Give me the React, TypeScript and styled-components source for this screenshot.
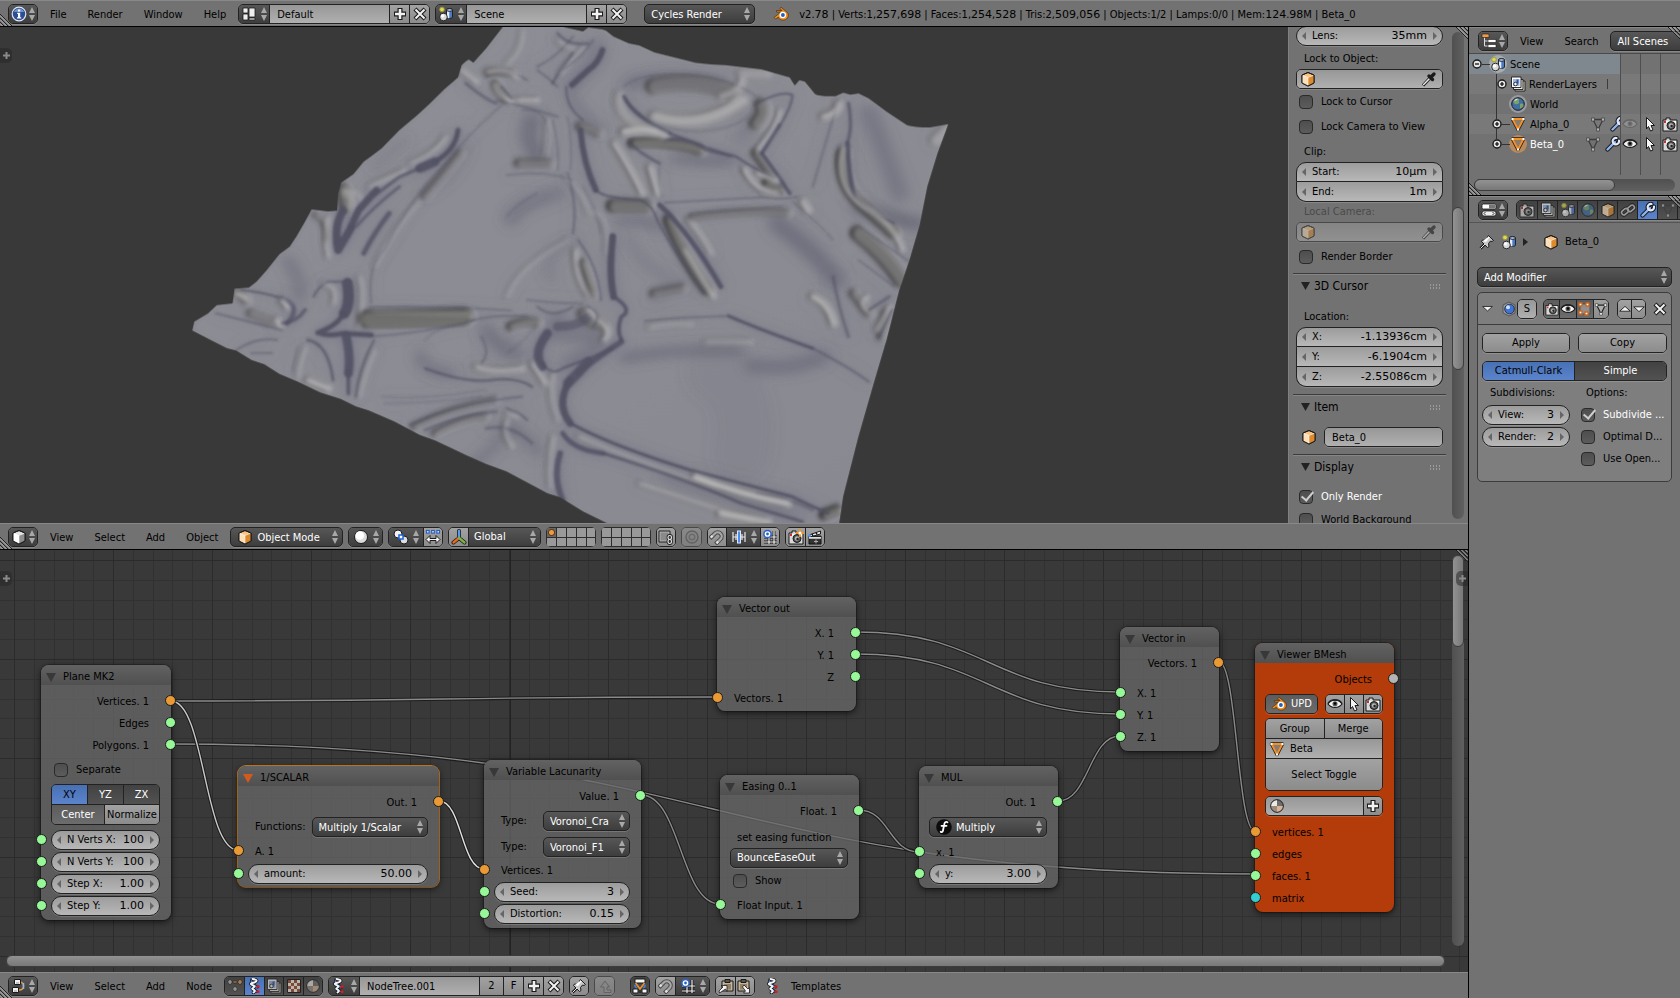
import React from "react";
import styled, { createGlobalStyle, css } from "styled-components";

const UI = `"DejaVu Sans Condensed", "DejaVu Sans", sans-serif`;
const NUM = `"DejaVu Sans", sans-serif`;

const Global = createGlobalStyle`
  * { box-sizing: border-box; }
  body { margin: 0; background: #000; }
  body, button, input, select { font: 11px/14px ${UI}; color: #000; }
  button, input, select { margin: 0; padding: 0; border: 0; background: none; border-radius: 0; outline: 0; }
  svg { display: block; flex: none; }
`;

/* ---------- icons (16 x 16) ---------- */

const K = "#1a1a1a";
const cube = (a: string, b: string, c: string) => (
  <g stroke={K} strokeWidth="1" strokeLinejoin="round">
    <path d="M8 1.500L14 4v8L8 15L2 12V4z" fill={b} />
    <path d="M2 4l6 2.500v8.500L2 12z" fill={a} stroke="none" />
    <path d="M8 6.500L14 4v8l-6 3z" fill={c} stroke="none" />
    <path d="M2 4l6 2.500L14 4M8 6.500V15" fill="none" stroke="#fff" strokeWidth=".7" opacity=".8" />
    <path d="M8 1.500L14 4v8L8 15L2 12V4z" fill="none" />
  </g>
);
const scene = (
  <g stroke={K} strokeWidth=".9">
    <circle cx="4" cy="3.500" r="2.300" fill="#ded94e" stroke="#9a9a40" />
    <path d="M8.500 4v7c0 1.800 6 1.800 6 0V4c0-1.800-6-1.800-6 0z" fill="#4b79c4" />
    <path d="M9 4v7.500c.5.500 1.500.8 2.300.8V5.500C10 5.500 9 5 9 4z" fill="#e6eefb" stroke="none" />
    <ellipse cx="11.500" cy="4" rx="3" ry="1.300" fill="#bcd1f5" />
    <circle cx="5.500" cy="11" r="3.800" fill="#dcdcdc" />
    <circle cx="4.500" cy="9.800" r="1.600" fill="#fff" stroke="none" />
  </g>
);
const helix = (
  <g fill="none" strokeLinecap="round">
    <path d="M5.500 1c5.500 .8 5.500 2.500 0 4s5 2.500 1 4.500s4 2 0 5" stroke={K} strokeWidth="3.600" />
    <path d="M5 4.500L4.500 2.500M5.500 6.500l5 2.500M5.500 10.500l4 3" stroke={K} strokeWidth="3" />
    <path d="M5 5L4.500 3M5 6.500l5 2.500M5 10.500l4 3" stroke="#4a80e0" strokeWidth="1.600" />
    <path d="M5.500 1c5.500 .8 5.500 2.500 0 4s5 2.500 1 4.500s4 2 0 5" stroke="#f4f4f4" strokeWidth="1.900" />
    <path d="M10.500 8.500h1M10.500 13.800h1" stroke="#e01818" strokeWidth="2.400" />
  </g>
);
const triO = (
  <g>
    <path d="M2.500 3h11L8 13.500z" fill="#9a8a76" stroke={K} strokeWidth="3.400" strokeLinejoin="round" />
    <path d="M2.500 3h11L8 13.500z" fill="#8a7c6c" stroke="#f4912a" strokeWidth="1.800" strokeLinejoin="round" />
    <path d="M1.500 2h2v2h-2zM12.500 2h2v2h-2zM7 12.500h2v2H7z" fill="#fff" />
  </g>
);
const camera = (
  <g>
    <path d="M1 4h3V2h4v2h7v11H1z" fill="#d9d9d9" stroke={K} />
    <path d="M2 5h12v2H2z" fill="#fff" />
    <circle cx="9" cy="9.500" r="4" fill="#555" stroke={K} />
    <circle cx="9" cy="9.500" r="2.200" fill="#b8b8b8" />
    <circle cx="9.600" cy="10" r="1.300" fill="#222" />
    <path d="M2 5h2v2H2z" fill="#d42a2a" />
  </g>
);
const magnet = (
  <g fill="none" transform="rotate(45 8 8)">
    <path d="M4 14V7a4 4 0 0 1 8 0v7" stroke="#4a4a4a" strokeWidth="4.200" />
    <path d="M4 13V7a4 4 0 0 1 8 0v6" stroke="#a9a9a9" strokeWidth="2.200" />
    <path d="M2.900 11.500h2.200M10.900 11.500h2.200" stroke="#e4e4e4" strokeWidth="2.400" />
  </g>
);
const snapgrid = (
  <g>
    <path d="M7 2v13M12 2v13M2 8h13M2 13h13" stroke={K} strokeWidth="2.800" />
    <path d="M7 2v13M12 2v13M2 8h13M2 13h13" stroke="#f0f0f0" strokeWidth="1.200" />
    <circle cx="5.500" cy="5" r="3.600" fill="#fff" stroke="#2a63c8" strokeWidth="1.500" />
    <circle cx="5.500" cy="5" r="1.400" fill="#2a63c8" />
  </g>
);
const cross = (
  <g fill="none">
    <path d="M3 3l10 10M13 3L3 13" stroke={K} strokeWidth="4.200" />
    <path d="M3.500 3.500l9 9M12.500 3.500l-9 9" stroke="#f2f2f2" strokeWidth="2" />
  </g>
);
const plus = (
  <g>
    <path d="M8 2v12M2 8h12" stroke={K} strokeWidth="5" />
    <path d="M8 3v10M3 8h10" stroke="#f2f2f2" strokeWidth="2.600" />
  </g>
);
const wrench = (
  <g fill="none" strokeLinecap="round">
    <path d="M2.500 13.500L10 6" stroke={K} strokeWidth="4.200" />
    <path d="M14 4.500A3.300 3.300 0 1 1 11.500 2" stroke={K} strokeWidth="4" />
    <path d="M2.500 13.500L10 6" stroke="#8fb4f0" strokeWidth="2.400" />
    <path d="M14 4.500A3.200 3.200 0 1 1 11.500 2" stroke="#dfe9fb" strokeWidth="2.200" />
  </g>
);
const world = (
  <g>
    <circle cx="8" cy="8" r="6.300" fill="#3f6f9f" stroke={K} />
    <path d="M3 6c2-3 5-4 6-3s-1 2 0 3s-2 3-4 2zM10 8c2-1 3.500 0 3.500 1.500S11 13 10 12z" fill="#7da06a" />
    <path d="M4 4.500c1-1.500 3-2 4-1.700C7 4 5.500 5 4 4.500z" fill="#e9f0f7" />
  </g>
);
const layersI = (
  <g stroke={K} strokeWidth=".9">
    <path d="M5 5h10v10H5z" fill="#d8d0c0" />
    <path d="M3.500 3.500h9.500v10H3.500z" fill="#e8e8e8" />
    <path d="M1.500 1h9.500v10.500H1.500z" fill="#fff" />
    <path d="M3 3h6.500v7H3z" fill="#9fb9df" stroke="none" />
    <circle cx="5.500" cy="8" r="1.800" fill="#fff" />
    <path d="M6.500 3.500h2v4h-2z" fill="#2d55a8" stroke="none" />
  </g>
);
const matball = (
  <g>
    <circle cx="8" cy="8" r="6.300" fill="#6e6e6e" stroke={K} />
    <path d="M8 2.200A5.800 5.800 0 0 0 2.200 8H8z" fill="#efe9e2" />
    <path d="M8 8h5.800A5.800 5.800 0 0 1 8 13.800z" fill="#d9b394" />
    <path d="M8 8H2.200A5.800 5.800 0 0 0 8 13.800z" fill="#9b8a80" />
  </g>
);
const pin = (
  <g strokeLinejoin="round">
    <path d="M1.500 14.500L6 10" stroke={K} strokeWidth="2.600" />
    <path d="M9.500 1.500l5 5l-1.500 1l-1.500-.5l-2 2.500l.5 3l-1.500 1L2.500 7.500l1-1.500l3 .5L9 4.500L8.500 3z" fill="#c9c9c9" stroke={K} />
    <path d="M9.700 2.500l1 1L7 8L4 7z" fill="#fff" />
    <path d="M1.500 14.500L6 10" stroke="#eee" />
  </g>
);
const eye = (
  <g>
    <path d="M1 8c3-5 11-5 14 0c-3 4.500-11 4.500-14 0z" fill="#f4f4f4" stroke={K} strokeWidth="1.100" />
    <circle cx="8" cy="7.700" r="2.500" fill="#555" />
    <circle cx="8" cy="7.500" r="1.200" fill="#000" />
    <path d="M1 7.500c3-5 11-5 14 0" fill="none" stroke="#222" strokeWidth="1.300" />
  </g>
);
const ICONS: Record<string, React.ReactNode> = {
  info: (
    <g>
      <circle cx="8" cy="8" r="6.800" fill="#2c4f94" stroke="#dfe6f4" strokeWidth="1.200" />
      <path d="M3 6a5.300 5.300 0 0 1 10 0z" fill="#6f93d0" />
      <path d="M7 3.500h2.200v2H7zM6.200 6.800h3v4.500h1v1.200H6v-1.200h1V8h-.8z" fill="#fff" />
    </g>
  ),
  cubeO: cube("#fde0b8", "#f7c483", "#dd8a2e"),
  cubeW: cube("#fff", "#e4e4e4", "#8f8f8f"),
  scene,
  helix,
  camera,
  magnet,
  snapgrid,
  cross,
  plus,
  wrench,
  world,
  layers: layersI,
  matball,
  pin,
  eye,
  triO,
  triG: (
    <g>
      <path d="M3 3.500h10L8 13.500z" fill="none" stroke="#3c3c3c" strokeWidth="1.300" />
      <path d="M1.500 2h3v3h-3zM11.500 2h3v3h-3zM6.500 12h3v3h-3z" fill="#b4b4b4" stroke="#3c3c3c" strokeWidth=".7" />
    </g>
  ),
  triW: (
    <g>
      <path d="M3 3.500h10L8 13.500z" fill="#b0b0b0" stroke="#222" strokeWidth="1.300" />
      <path d="M1.500 2h3v3h-3zM11.500 2h3v3h-3zM6.500 12h3v3h-3z" fill="#fff" stroke="#222" strokeWidth=".7" />
    </g>
  ),
  layout: (
    <g fill="#eee" stroke={K} strokeWidth=".8">
      <path d="M2 2h5v5H2zM2 8h5v6H2zM8 2h6v9H8zM8 12h6v2H8z" />
    </g>
  ),
  blender: (
    <g>
      <path d="M1 11.500L8 6H3.500V4.500H9L7 2.500L8 1.200l6 5c2 2 1.700 5-.5 6.800c-2.500 2-7 1.500-8.200-1.800L2.500 13z" fill="#ee8b1d" stroke="#4a3010" strokeWidth=".7" />
      <circle cx="9.800" cy="9" r="3.300" fill="#fff" />
      <circle cx="9.900" cy="9" r="1.900" fill="#2461b4" />
    </g>
  ),
  dropper: (
    <g>
      <path d="M2 14.500L9 7" stroke={K} strokeWidth="3.200" />
      <path d="M2.200 14L9 7" stroke="#e8e8e8" strokeWidth="1.500" />
      <path d="M8 5l3.500 3.500M9.500 6.500L13 3" stroke={K} strokeWidth="3.400" strokeLinecap="round" />
    </g>
  ),
  outliner: (
    <g>
      <path d="M3.500 3v10h4M3.500 8h4" fill="none" stroke="#ddd" />
      <path d="M1 1h7v3.500H1z" fill="#f09a4a" stroke={K} strokeWidth=".6" />
      <path d="M7 6.500h8v3H7zM7 11.500h8v3H7z" fill="#fff" stroke={K} strokeWidth=".6" />
    </g>
  ),
  props: (
    <g stroke={K} strokeWidth=".8">
      <rect x="1" y="2" width="14" height="5" rx="1.500" fill="#fff" />
      <path d="M8 2.500h6.500v4H8z" fill="#777" stroke="none" />
      <rect x="1" y="9" width="14" height="5" rx="2" fill="#eee" />
      <path d="M4.500 10L3 11.500L4.500 13M11.500 10l1.500 1.500l-1.500 1.500" fill="none" stroke="#000" />
    </g>
  ),
  nodes: (
    <g fill="none">
      <path d="M8 4c6 0 6 8 0 8" stroke="#e59a34" strokeWidth="1.500" />
      <path d="M12.500 5v6" stroke="#8fb6f2" strokeWidth="1.500" />
      <path d="M3.500 1.500h6v5h-6zM1.500 9.500h6v5h-6z" fill="#f2f2f2" stroke={K} />
      <path d="M5 5h3M3 13h3" stroke="#999" />
    </g>
  ),
  cursor: <path d="M4.500 1.500l8 8H9l2 4.500l-2.500 1l-2-4.500L4.500 13z" fill="#f4f4f4" stroke={K} strokeLinejoin="round" />,
  chain: (
    <g fill="none">
      <g stroke={K} strokeWidth="3.600">
        <rect x="1.500" y="7.500" width="7.500" height="4.500" rx="2.200" transform="rotate(-40 5 10)" />
        <rect x="7" y="4" width="7.500" height="4.500" rx="2.200" transform="rotate(-40 11 6)" />
      </g>
      <g stroke="#c6c6c6" strokeWidth="1.600">
        <rect x="1.500" y="7.500" width="7.500" height="4.500" rx="2.200" transform="rotate(-40 5 10)" />
        <rect x="7" y="4" width="7.500" height="4.500" rx="2.200" transform="rotate(-40 11 6)" />
      </g>
    </g>
  ),
  sphere: (
    <g>
      <circle cx="8" cy="8" r="6.500" fill="#dcdcdc" stroke={K} />
      <circle cx="6.800" cy="6.500" r="4.300" fill="#fff" />
    </g>
  ),
  pivot: (
    <g>
      <circle cx="5" cy="5" r="4" fill="#f2f2f2" stroke={K} />
      <circle cx="11" cy="11" r="4" fill="#ddd" stroke={K} />
      <path d="M6 6h4v4H6z" fill="#fff" stroke="#1d62d8" strokeWidth="1.500" />
    </g>
  ),
  centers: (
    <g>
      <g fill="#fff" stroke="#2560c0" strokeWidth="1.200">
        <rect x="1.500" y="1.500" width="2.600" height="2.600" />
        <rect x="6.700" y="1.500" width="2.600" height="2.600" />
        <rect x="11.900" y="1.500" width="2.600" height="2.600" />
      </g>
      <path d="M1 10.500l4-4v3h6v-3l4 4l-4 4v-3H5v3z" fill="#f4f4f4" stroke={K} />
    </g>
  ),
  axes: (
    <g strokeLinecap="round">
      <path d="M8 9V2M8 9l-5.500 4.500M8 9l5.500 4.500" stroke={K} strokeWidth="4" />
      <path d="M8 9V2" stroke="#5a9be8" strokeWidth="2.400" />
      <path d="M8 9l-5.500 4.500" stroke="#e86a1e" strokeWidth="2.400" />
      <path d="M8 9l5.500 4.500" stroke="#7cb342" strokeWidth="2.400" />
    </g>
  ),
  lockcam: (
    <g>
      <path d="M1 2h11v11H1z" fill="#b4b4b4" stroke="#222" />
      <path d="M2.500 3.500h8v8h-8z" fill="#8a8a8a" />
      <g fill="none" stroke="#222" strokeWidth="2.800">
        <rect x="10" y="6.500" width="3.500" height="4" rx="1.700" />
        <rect x="10" y="10.500" width="3.500" height="4" rx="1.700" />
      </g>
      <g fill="none" stroke="#e4e4e4" strokeWidth="1.200">
        <rect x="10" y="6.500" width="3.500" height="4" rx="1.700" />
        <rect x="10" y="10.500" width="3.500" height="4" rx="1.700" />
      </g>
    </g>
  ),
  prop: (
    <g fill="none" stroke="#555" strokeWidth="1.500">
      <circle cx="8" cy="8" r="6" />
      <circle cx="8" cy="8" r="2.800" stroke="#666" />
    </g>
  ),
  snapinc: (
    <g>
      <path d="M2 3v10M5 5v6M11 5v6M14 3v10M2 8h12" stroke="#e8e8e8" strokeWidth="1.200" />
      <rect x="6.500" y="2" width="3" height="12" fill="#4d8df0" stroke="#dfe9fb" />
    </g>
  ),
  camplus: (
    <g>
      {camera}
      <path d="M12 0v8M8 4h8" stroke="#f29222" strokeWidth="2" />
      <circle cx="12" cy="4" r="1.500" fill="#fff" />
    </g>
  ),
  clapper: (
    <g>
      <path d="M2 7h12v8H2z" fill="#333" stroke="#111" />
      <path d="M2 6L13.500 2v3L3 8z" fill="#eee" stroke={K} />
      <path d="M5 5l1 2M9 3.500l1 2" stroke="#111" strokeWidth="1.500" />
      <path d="M2 8h12v1.800H2z" fill="#ddd" />
      <path d="M9 10.500v4M7 12.500h4" stroke="#aaa" />
      <circle cx="2.500" cy="6.500" r="1.400" fill="#4d9bf0" />
    </g>
  ),
  shader: (
    <g fill="#a9a49c" stroke={K} strokeWidth=".6">
      <path d="M3 1l2.500 3L3 7L.5 4zM8 8l2.500 3L8 14l-2.500-3zM13 1l2.500 3L13 7l-2.500-3z" />
      <path d="M6 3h4v2H6z" fill="#c08a56" />
      <path d="M13 1l2.500 3L13 7l-2.500-3z" fill="#c08a56" />
    </g>
  ),
  checker: (
    <g>
      <path d="M1.500 1.500h13v13h-13z" fill="#d8d0c6" stroke={K} />
      <path d="M2 2h3v3H2zM8 2h3v3H8zM5 5h3v3H5zM11 5h3v3h-3zM2 8h3v3H2zM8 8h3v3H8zM5 11h3v3H5zM11 11h3v3h-3z" fill="#8a4a36" />
    </g>
  ),
  parent: <path d="M7 14.500V9H3.500L8 3l4.500 6H10v3h4v2.500z" fill="#9a9a9a" stroke="#555" />,
  backdrop: (
    <g>
      <path d="M3 1h10v4H3z" fill="#f4f4f4" stroke={K} />
      <path d="M3.500 5L8 11l4.500-6" fill="none" stroke="#f29222" strokeWidth="1.600" />
      <path d="M2.500 7L5 11M13.500 7L11 11" stroke="#3f7fe0" strokeWidth="1.600" />
      <path d="M1 11h5v4H1zM10 11h5v4h-5z" fill="#f4f4f4" stroke={K} />
      <path d="M6 12h4v3H6z" fill="#333" />
    </g>
  ),
  copy: (
    <g>
      <path d="M4 3h11v10H4z" fill="#c9b594" stroke={K} />
      <path d="M7 1.500h5v3H7z" fill="#555" stroke={K} />
      <path d="M6 6h7v5.500H6z" fill="#8f8069" />
      <path d="M1.500 15l-.5-2l4-4l-2-1.500h6v6L7.500 11z" fill="#f4f4f4" stroke={K} strokeWidth=".8" />
    </g>
  ),
  paste: (
    <g>
      <path d="M1 3h11v10H1z" fill="#c9b594" stroke={K} />
      <path d="M4 1.500h5v3H4z" fill="#555" stroke={K} />
      <path d="M3 6h7v5.500H3z" fill="#8f8069" />
      <path d="M7 7l4 4l1.500-1.500V15h-6L8.500 13L5.500 9z" fill="#f4f4f4" stroke={K} strokeWidth=".8" />
    </g>
  ),
  func: (
    <g>
      <circle cx="8" cy="8" r="7.800" fill="#0c0c0c" />
      <path d="M11.500 3.300c-1.800-1-3 .2-3.300 2.200L7 11.500c-.3 1.600-1.300 2-2.300 1.300M5.500 6.800h5" fill="none" stroke="#fff" strokeWidth="1.800" strokeLinecap="round" />
    </g>
  ),
  subsurf: (
    <g>
      <path d="M8 1l6 3v8l-6 3l-6-3V4z" fill="#9a9a9a" stroke="#555" />
      <circle cx="8.500" cy="8" r="4.800" fill="#3f74d6" stroke={K} strokeWidth=".7" />
      <circle cx="7" cy="6.300" r="2" fill="#cfe0fa" />
    </g>
  ),
  edit: (
    <g>
      <path d="M3 3h8l2 2v8H5l-2-2z" fill="#8f8f8f" stroke="#555" />
      <g fill="#fff" stroke="#d0661c" strokeWidth="1.300">
        <path d="M2 2h3v3H2zM9 2h3v3H9zM2 10h3v3H2zM8 11h3v3H8z" />
      </g>
    </g>
  ),
  up: <path d="M2 10.500L8 5l6 5.500z" fill="#f4f4f4" stroke={K} strokeLinejoin="round" />,
  down: <path d="M2 5.500L8 11l6-5.500z" fill="#f4f4f4" stroke={K} strokeLinejoin="round" />,
  expand: (
    <g>
      <circle cx="8" cy="8" r="4" fill="#e6e6e6" stroke={K} strokeWidth="1.400" />
      <path d="M8 6v4M6 8h4" stroke="#000" strokeWidth="1.200" />
    </g>
  ),
  collapse: (
    <g>
      <circle cx="8" cy="8" r="4" fill="#e6e6e6" stroke={K} strokeWidth="1.400" />
      <path d="M6 8h4" stroke="#000" strokeWidth="1.200" />
    </g>
  ),
};

const Icon = ({ n, s = 16, o = 1 }: { n: string; s?: number; o?: number }) => (
  <svg width={s} height={s} viewBox="0 0 16 16" opacity={o} aria-hidden="true">
    {ICONS[n]}
  </svg>
);
const UpDown = () => (
  <svg width="6" height="14" viewBox="0 0 6 14" aria-hidden="true">
    <path d="M3 0l3 6H0zM3 14l3-6H0z" fill="#a8a8a8" />
  </svg>
);
const Arrow = ({ right = false }: { right?: boolean }) => (
  <svg width="4" height="8" viewBox="0 0 4 8" aria-hidden="true">
    <path d={right ? "M0 0l4 4l-4 4z" : "M4 0L0 4l4 4z"} fill="#666" />
  </svg>
);

/* ---------- widgets ---------- */

type Kind = "menu" | "tool" | "on" | "down" | "text" | "radio";
const FILL: Record<Kind, string> = {
  menu: "linear-gradient(#575757, #3d3d3d)",
  radio: "linear-gradient(#424242, #525252)",
  tool: "linear-gradient(#a2a2a2, #8c8c8c)",
  on: "linear-gradient(#4870b4, #5b84cc)",
  down: "linear-gradient(#5c5c5c, #6c6c6c)",
  text: "linear-gradient(#979797, #b0b0b0)",
};
const INK: Record<Kind, string> = { menu: "#fff", radio: "#fff", tool: "#000", on: "#000", down: "#fff", text: "#000" };

const Group = styled.div<{ $grow?: boolean; $faded?: boolean }>`
  display: flex;
  height: 20px;
  flex: ${(p) => (p.$grow ? "1 1 0" : "none")};
  min-width: 0;
  border: 1px solid #222;
  border-radius: 5px;
  overflow: hidden;
  box-shadow: 0 1px 0 rgba(255, 255, 255, 0.16);
  opacity: ${(p) => (p.$faded ? 0.5 : 1)};
`;
const Seg = styled.button<{ $w?: number; $kind?: Kind; $gap?: number }>`
  display: flex;
  align-items: center;
  justify-content: center;
  gap: ${(p) => p.$gap ?? 4}px;
  flex: ${(p) => (p.$w ? `0 0 ${p.$w}px` : "1 1 0")};
  min-width: 0;
  white-space: nowrap;
  background: ${(p) => FILL[p.$kind ?? "tool"]};
  color: ${(p) => INK[p.$kind ?? "tool"]};
  & + &,
  input + & {
    border-left: 1px solid #222;
  }
`;
const IconSlot = styled.span`
  display: flex;
  align-items: center;
  padding: 0 5px 0 3px;
  background: ${FILL.text};
`;
const TextInput = styled.input<{ $w?: number }>`
  flex: ${(p) => (p.$w ? `0 0 ${p.$w}px` : "1 1 0")};
  width: 0;
  min-width: 0;
  padding: 1px 7px 0;
  background: ${FILL.text};
  button + & {
    border-left: 1px solid #222;
  }
  ${IconSlot} + & {
    padding-left: 0;
  }
`;

const SelectBox = styled.span<{ $w?: number }>`
  display: flex;
  align-items: center;
  gap: 4px;
  height: 20px;
  flex: ${(p) => (p.$w ? `0 0 ${p.$w}px` : "1 1 0")};
  min-width: 0;
  padding: 0 4px 0 6px;
  border: 1px solid #222;
  border-radius: 5px;
  background: ${FILL.menu};
  box-shadow: 0 1px 0 rgba(255, 255, 255, 0.16);
`;
const NativeSelect = styled.select`
  appearance: none;
  flex: 1 1 0;
  width: 0;
  min-width: 0;
  padding-top: 1px;
  color: #fff;
`;
const Select = ({ value, label, icon, w }: { value: string; label: string; icon?: string; w?: number }) => (
  <SelectBox $w={w}>
    {icon && <Icon n={icon} />}
    <NativeSelect aria-label={label} defaultValue={value}>
      <option>{value}</option>
    </NativeSelect>
    <UpDown />
  </SelectBox>
);

const FieldBox = styled.label`
  display: flex;
  align-items: center;
  gap: 3px;
  height: 20px;
  flex: 1 1 0;
  min-width: 0;
  padding: 0 5px;
  border: 1px solid #222;
  border-radius: 10px;
  background: linear-gradient(#9c9c9c, #b8b8b8);
  box-shadow: 0 1px 0 rgba(255, 255, 255, 0.16);
  white-space: nowrap;
`;
const FieldStack = styled.div`
  display: flex;
  flex-direction: column;
  ${FieldBox} {
    flex: none;
  }
  ${FieldBox}:not(:first-child) {
    border-top-left-radius: 0;
    border-top-right-radius: 0;
    border-top: 0;
  }
  ${FieldBox}:not(:last-child) {
    border-bottom-left-radius: 0;
    border-bottom-right-radius: 0;
    box-shadow: none;
  }
`;
const Value = styled.input`
  flex: 1 1 0;
  width: 0;
  min-width: 0;
  padding-right: 3px;
  text-align: right;
  font-family: ${NUM};
`;
const FieldName = styled.span`
  padding-left: 3px;
`;
const NumField = ({ name, value }: { name: string; value: string }) => (
  <FieldBox>
    <Arrow />
    <FieldName>{name}</FieldName>
    <Value defaultValue={value} />
    <Arrow right />
  </FieldBox>
);

const Box = styled.input`
  appearance: none;
  position: relative;
  flex: none;
  width: 14px;
  height: 14px;
  border: 1px solid #2a2a2a;
  border-radius: 4px;
  background: linear-gradient(#4e4e4e, #5c5c5c);
  &:checked::after {
    content: "";
    position: absolute;
    left: 4px;
    top: -2px;
    width: 5px;
    height: 10px;
    border: solid #cfcfcf;
    border-width: 0 2px 2px 0;
    transform: rotate(40deg);
  }
`;
const CheckLabel = styled.label<{ $h: number; $on?: boolean }>`
  display: flex;
  align-items: center;
  gap: 8px;
  height: ${(p) => p.$h}px;
  padding-left: 3px;
  color: ${(p) => (p.$on ? "#fff" : "#000")};
  white-space: nowrap;
`;
const Check = ({ text, on, h = 25 }: { text: string; on?: boolean; h?: number }) => (
  <CheckLabel $h={h} $on={on}>
    <Box type="checkbox" defaultChecked={on} />
    {text}
  </CheckLabel>
);

/* ---------- frame ---------- */

const Screen = styled.div`
  display: flex;
  flex-direction: column;
  height: 100vh;
  min-height: 720px;
  overflow: hidden;
  background: #000;
`;
const Bar = styled.div`
  position: relative;
  display: flex;
  align-items: center;
  flex: none;
  height: 26px;
  padding: 1px 0 0 8px;
  background: #727272;
  border-top: 1px solid #888;
  gap: 5px;
  overflow: hidden;
  white-space: nowrap;
`;
const Menus = styled.nav`
  display: flex;
  margin: 0 -3px 0 -4px;
`;
const MenuBtn = styled.button`
  padding: 1px 10px 0 11px;
`;
const Columns = styled.div`
  display: grid;
  grid-template-columns: minmax(0, 1fr) 211px;
  gap: 1px;
  flex: 1;
  min-height: 0;
  padding-top: 1px;
`;
const LeftCol = styled.div`
  display: grid;
  grid-template-rows: minmax(0, 522fr) minmax(0, 448fr);
  gap: 1px;
  min-height: 0;
`;
const RightCol = styled.div`
  display: flex;
  flex-direction: column;
  gap: 1px;
  min-height: 0;
`;
const Area = styled.section<{ $h?: number }>`
  position: relative;
  display: flex;
  flex-direction: column;
  flex: ${(p) => (p.$h ? `0 0 ${p.$h}px` : "1 1 0")};
  min-height: 0;
  min-width: 0;
  overflow: hidden;
  background: #727272;
`;
const CornerSvg = styled.svg<{ $at: "tr" | "bl" }>`
  position: absolute;
  z-index: 3;
  ${(p) => (p.$at === "tr" ? css`top: 0; right: 0;` : css`bottom: 0; left: 0;`)}
`;
const Corner = ({ at }: { at: "tr" | "bl" }) => (
  <CornerSvg $at={at} width="12" height="12" viewBox="0 0 12 12" aria-hidden="true">
    <path d="M0 0l12 12M4 0l8 8M8 0l4 4" stroke="#222" transform={at === "bl" ? "rotate(180 6 6)" : undefined} />
    <path d="M1.500 0L12 10.500M5.500 0L12 6.500M9.500 0L12 2.500" stroke="#bbb" transform={at === "bl" ? "rotate(180 6 6)" : undefined} />
  </CornerSvg>
);
const Stats = styled.span`
  padding: 1px 0 0 5px;
`;
const Digits = styled.span`
  font-family: ${NUM};
`;
const Gap = styled.span<{ $w: number }>`
  flex: none;
  width: ${(p) => p.$w}px;
`;
const EditorMenu = ({ icon, label }: { icon: string; label: string }) => (
  <Group>
    <Seg $w={28} $kind="menu" $gap={2} aria-label={label}>
      <Icon n={icon} />
      <UpDown />
    </Seg>
  </Group>
);

/* ---------- 3D view ---------- */

const ViewBody = styled.div`
  display: flex;
  justify-content: flex-end;
  flex: 1;
  min-height: 0;
  position: relative;
  background: #393939;
`;
const MeshSvg = styled.svg`
  position: absolute;
  left: 180px;
  top: -7px;
`;
const Tab = styled.button<{ $right?: boolean }>`
  position: absolute;
  z-index: 2;
  ${(p) => (p.$right ? "right: 0; border-radius: 5px 0 0 5px;" : "left: 0; border-radius: 0 5px 5px 0;")}
  top: 21px;
  display: flex;
  align-items: center;
  justify-content: center;
  width: 12px;
  height: 15px;
  background: rgba(40, 40, 40, 0.55);
`;
const TabPlus = () => (
  <svg width="7" height="7" viewBox="0 0 7 7" aria-hidden="true">
    <path d="M3.500 0v7M0 3.500h7" stroke="#8a8a8a" strokeWidth="2" />
  </svg>
);

type Ridge = [string, number, number?];
const OUTLINE =
  "M638 10L600 85L575 128L566 118L560 124L552 135L545 172L520 205L490 250L465 285L430 330L395 385L375 408L360 425L340 462L316 488L310 520L308 572L290 574L258 568L245 605L228 650L215 680L195 702L170 750L150 785L135 803L107 806L103 850L72 855L55 880L28 905L24 932L60 960L92 985L110 992L140 1020L165 1033L195 1062L230 1085L275 1118L315 1137L345 1160L370 1172L420 1205L470 1245L500 1262L560 1305L600 1332L640 1355L720 1420L745 1432L790 1475L840 1512L1292 1512L1300 1430L1330 1250L1360 1090L1385 960L1410 810L1430 720L1450 615L1465 500L1485 400L1506 312L1470 322Q1440 322 1425 315L1385 275L1350 235L1330 220L1314 224L1300 218L1285 228Q1255 230 1245 222L1233 200L1225 185L1214 180L1205 196L1195 172L1140 148L1070 135Q1040 134 1010 128L930 97L900 76L880 70L850 50L835 32L828 28L800 22L790 34L755 22L740 10z";
const DARK_WIDE: Ridge[] = [
  ["M820 60Q825 110 765 200Q765 270 830 330", 7, 0.5],
  ["M690 300Q672 350 700 405", 16, 0.6],
  ["M1110 300Q1120 340 1095 360", 8, 0.4],
  ["M740 520Q650 560 650 600", 14, 0.4],
  ["M1170 610Q1250 700 1285 780", 18, 0.55],
  ["M1330 560Q1400 600 1450 612", 12, 0.7],
  ["M1350 280Q1370 350 1410 520", 18, 0.4],
  ["M870 1015Q960 985 1100 992", 9, 0.6],
  ["M1120 1035Q1200 1055 1260 1010", 14, 0.5],
  ["M640 1220Q690 1250 700 1300", 8, 0.5],
  ["M470 1000Q470 1050 530 1060", 9, 0.5],
  ["M740 900L730 940M600 930Q620 980 660 1000", 14, 0.5],
  ["M930 830Q960 800 990 800", 8, 0.6],
  ["M880 190Q960 160 1060 190", 12, 0.5],
  ["M210 720Q240 780 235 830", 10, 0.5],
  ["M480 520Q540 470 560 380", 9, 0.3],
  ["M1050 1060Q1120 1120 1100 1300", 60, 0.1],
  ["M560 1350Q640 1260 640 1220", 10, 0.4],
  ["M970 415Q1040 430 1080 418", 9, 0.6],
  ["M860 600Q920 600 940 620", 10, 0.5],
  ["M730 780Q700 720 770 660", 6, 0.4],
  ["M880 650Q900 740 960 770", 8, 0.3],
  ["M760 950Q790 930 830 960Q800 1010 760 1030", 14, 0.4],
  ["M430 240L500 170M380 440L440 360", 8, 0.25],
  ["M950 1370Q1050 1430 1200 1480", 6, 0.5],
];
const DARK: Ridge[] = [
  ["M828 90Q820 130 800 150L768 195", 6, 0.95],
  ["M757 200Q755 260 790 300", 2, 0.7],
  ["M785 330Q790 430 815 510", 6, 0.95],
  ["M815 510Q830 535 900 540Q925 550 935 600", 2, 0.8],
  ["M545 330Q540 390 500 425", 5, 0.95],
  ["M500 425L470 445", 9, 0.9],
  ["M470 445L430 470L370 540", 3, 0.8],
  ["M385 510L350 570L335 620", 7, 0.95],
  ["M320 570Q300 620 310 690L335 625", 8, 0.95],
  ["M345 620Q380 560 430 500", 3, 0.7],
  ["M410 580Q380 640 360 700", 5, 0.8],
  ["M328 790Q335 850 322 880", 11, 0.95],
  ["M320 880Q310 915 270 938Q290 950 320 940L375 945", 5, 0.95],
  ["M325 945Q335 1010 330 1060", 9, 0.9],
  ["M330 1050L330 1120", 4, 0.8],
  ["M250 960Q290 970 300 1080", 3, 0.7],
  ["M330 785H290Q270 800 262 830", 2, 0.7],
  ["M370 950Q480 940 580 900", 1, 0.9],
  ["M370 862Q500 855 650 872", 1, 0.8],
  ["M380 960Q350 1050 345 1130", 2, 0.7],
  ["M848 650Q840 760 850 830", 7, 0.95],
  ["M850 830Q890 870 865 890Q855 930 865 960", 4, 0.85],
  ["M865 965Q800 1030 780 1060", 6, 0.85],
  ["M800 1025Q780 1060 760 1090", 10, 0.85],
  ["M765 1080Q735 1150 765 1210", 7, 0.95],
  ["M765 1210Q850 1280 1000 1350Q1100 1390 1200 1430Q1240 1460 1270 1480", 3, 0.95],
  ["M720 940Q690 1000 710 1040", 9, 0.9],
  ["M710 1030Q730 1070 750 1045L850 985", 2, 0.85],
  ["M480 1045Q560 1090 610 1080T690 1100", 2, 0.85],
  ["M750 1240Q770 1290 830 1300", 5, 0.85],
  ["M830 1300Q980 1370 1100 1450L1220 1505", 3, 0.85],
  ["M745 1300Q730 1370 750 1440", 6, 0.85],
  ["M640 1165Q670 1180 680 1200M450 1215Q540 1150 670 1130", 2, 0.6],
  ["M480 1230Q560 1180 620 1175M600 1225Q650 1210 690 1270", 3, 0.5],
  ["M395 1130Q480 1140 600 1110M400 1150Q500 1150 590 1130", 1, 0.4],
  ["M910 903Q990 890 1075 888", 1, 0.9],
  ["M1075 888Q1130 925 1240 985", 3, 0.95],
  ["M1240 985Q1310 1040 1350 1085", 2, 0.6],
  ["M940 555Q1000 640 1060 800", 5, 0.9],
  ["M935 600Q970 700 1030 820", 2, 0.7],
  ["M870 230Q890 290 960 340", 4, 0.9],
  ["M960 340Q1040 390 1090 410Q1130 450 1165 475", 2, 0.9],
  ["M870 200Q900 155 1000 165Q1090 180 1130 230", 1, 0.6],
  ["M1120 270Q1110 320 1020 335Q960 335 920 300", 1, 0.5],
  ["M1130 250Q1180 210 1200 225Q1200 260 1170 330", 2, 0.85],
  ["M1175 315L1140 400", 4, 0.85],
  ["M1140 400Q1170 460 1195 520", 4, 0.85],
  ["M880 365Q900 400 940 430M950 360Q1000 350 1030 390L1080 408", 3, 0.7],
  ["M1310 250Q1320 330 1305 380", 3, 0.8],
  ["M1308 370Q1310 460 1320 530", 5, 0.9],
  ["M1320 530Q1350 580 1400 610", 2, 0.8],
  ["M1290 240L1240 500", 2, 0.5],
  ["M1330 620L1430 725M1330 720L1400 800", 1, 0.85],
  ["M1200 545Q1260 620 1280 660M950 548Q1050 540 1140 532Q1190 540 1210 530", 1, 0.8],
  ["M1000 580Q1100 570 1180 560", 1, 0.6],
  ["M1280 770Q1290 860 1310 950", 3, 0.6],
  ["M1350 870L1390 830M1370 950L1395 870", 3, 0.6],
  ["M630 255Q560 350 520 430Q440 560 400 690Q365 740 375 850", 1, 0.8],
  ["M560 190Q600 240 620 250M630 200L650 235", 3, 0.6],
  ["M740 40Q760 80 800 70M770 100Q740 160 730 190", 3, 0.6],
  ["M640 465Q720 450 770 480", 1, 0.7],
  ["M760 460Q780 560 770 640M780 660Q820 740 825 840", 2, 0.6],
  ["M670 270Q740 260 715 410", 1, 0.7],
  ["M680 840Q740 850 790 850", 1, 0.8],
  ["M740 920Q780 920 800 890", 9, 0.6],
  ["M120 810Q160 815 200 835", 2, 0.8],
  ["M200 835Q240 860 210 910", 5, 0.7],
  ["M70 880L200 930M110 990Q150 950 190 960M140 1000L180 1000", 2, 0.5],
  ["M200 910Q230 905 245 870", 4, 0.7],
  ["M1240 1470Q1190 1430 1130 1420", 3, 0.5],
  ["M620 240Q680 260 740 290M700 150Q720 170 740 200M600 170Q640 140 680 180", 2, 0.5],
  ["M770 50Q740 110 700 140M810 60Q790 110 750 150", 2, 0.5],
  ["M700 860Q730 900 770 860M800 860Q830 880 810 920", 2, 0.6],
  ["M590 950Q610 1000 590 1030M560 905Q620 880 680 890", 2, 0.5],
  ["M730 300Q745 380 740 450M760 290Q770 380 765 450M700 520Q660 550 640 590", 1, 0.6],
  ["M790 500Q815 560 825 640M940 440Q935 490 945 530M1100 450L1140 530", 1, 0.5],
  ["M640 1000Q680 960 700 910M480 960Q500 920 560 910M230 980L220 1050", 1, 0.5],
];
const LIGHT: Ridge[] = [
  ["M930 290Q1020 330 1100 240", 10, 0.55],
  ["M1060 230Q1100 210 1100 180", 6, 0.45],
  ["M860 225Q850 300 930 330", 8, 0.3],
  ["M870 335Q910 320 950 345", 7, 0.7],
  ["M850 370Q880 440 905 520M920 440L935 520", 4, 0.7],
  ["M600 155Q640 140 660 170M615 190Q620 230 650 245M660 240L700 240", 3, 0.8],
  ["M550 150L580 185", 4, 0.6],
  ["M520 350Q500 400 450 430M440 450L370 500M320 510Q360 520 350 540", 2, 0.7],
  ["M322 520Q340 530 332 560", 6, 0.4],
  ["M290 590Q280 650 290 710", 2, 0.8],
  ["M350 920Q360 800 350 770", 2, 0.6],
  ["M280 790Q310 800 300 850", 3, 0.5],
  ["M350 1130Q360 1050 380 990M245 980Q230 1040 230 1070", 2, 0.5],
  ["M110 820L130 835M200 840L210 860M190 900L195 915", 5, 0.7],
  ["M250 1080L290 1105", 5, 0.7],
  ["M380 874Q480 880 570 885", 2, 0.4],
  ["M775 690Q770 760 800 830", 3, 0.7],
  ["M800 870L810 890M820 900Q850 930 830 960", 4, 0.7],
  ["M690 1030L715 1090M580 1040Q610 1060 670 1045", 4, 0.6],
  ["M640 830Q660 740 760 660", 2, 0.35],
  ["M1010 1370Q1090 1420 1190 1450", 6, 0.9],
  ["M780 1250Q920 1340 1050 1400M900 1390Q1000 1440 1120 1500", 3, 0.5],
  ["M1060 1480L1150 1505", 7, 0.7],
  ["M730 1250Q720 1340 725 1400M730 1060Q720 1130 740 1200", 3, 0.4],
  ["M1045 830Q1010 740 990 690", 3, 0.8],
  ["M995 600Q1020 640 1040 700", 4, 0.45],
  ["M1130 390Q1170 320 1175 270", 2, 0.9],
  ["M1105 445Q1120 510 1170 520M1170 480L1130 460", 3, 0.9],
  ["M1220 545L1230 570M1260 290Q1290 280 1290 250", 6, 0.6],
  ["M1300 380Q1280 500 1340 560Q1400 610 1415 690", 3, 0.85],
  ["M1240 830Q1270 850 1280 910", 6, 0.65],
  ["M1345 870Q1330 850 1345 830M1390 860L1365 930", 4, 0.6],
  ["M1100 160L1150 160", 8, 0.3],
  ["M1480 360L1500 330", 10, 0.35],
  ["M920 920Q960 905 1000 912M1030 965L1120 965", 4, 0.3],
  ["M720 300Q720 360 715 405M740 60Q760 90 770 80M790 80Q760 130 745 160", 2, 0.6],
  ["M670 30Q670 90 640 130", 3, 0.3],
  ["M755 470Q790 520 800 580Q840 560 835 700", 2, 0.4],
  ["M470 540Q420 620 380 740", 2, 0.4],
  ["M640 1200Q630 1240 650 1280M640 1180L660 1190", 3, 0.5],
];
const OLIVE: Ridge[] = [
  ["M368 898Q460 898 560 890", 17, 1],
  ["M890 370Q960 360 1020 390", 10, 0.95],
  ["M850 558H915", 13, 0.85],
  ["M960 600Q990 720 1035 810", 11, 0.85],
  ["M1140 255Q1150 280 1130 310", 13, 0.7],
  ["M1130 400Q1150 440 1160 470", 9, 0.75],
  ["M1150 490L1180 510", 8, 0.9],
  ["M1300 400Q1290 500 1350 570L1400 640", 11, 0.85],
  ["M1330 640Q1380 700 1415 780", 15, 0.8],
  ["M785 320Q800 320 820 340M665 430H725", 9, 0.6],
  ["M620 190L640 240M605 158L650 160", 6, 0.85],
  ["M322 510L328 560", 13, 0.7],
  ["M550 400Q520 460 480 530", 8, 0.5],
  ["M930 200Q1020 175 1080 215", 16, 0.6],
  ["M650 920Q680 900 700 910", 9, 0.7],
  ["M930 820L985 805", 8, 0.6],
  ["M790 730Q800 780 810 820", 8, 0.8],
  ["M1320 820L1350 880M1385 880L1375 950", 8, 0.6],
  ["M460 1220Q540 1160 620 1140M500 1240Q560 1190 600 1190", 6, 0.6],
  ["M1005 595Q1100 570 1190 580", 8, 0.6],
  ["M790 880Q800 910 830 920", 10, 0.6],
  ["M1265 1485L1290 1470", 10, 1],
  ["M140 880L180 905M120 820L130 840", 9, 0.5],
  ["M265 585Q290 600 290 660", 5, 0.55],
];
const Ridges = ({ items, color, filter }: { items: Ridge[]; color: string; filter?: string }) => (
  <g stroke={color} fill="none" strokeLinecap="round" strokeLinejoin="round" filter={filter && `url(#${filter})`}>
    {items.map(([d, w, o], i) => (
      <path key={i} d={d} strokeWidth={w} opacity={o} vectorEffect="non-scaling-stroke" />
    ))}
  </g>
);
const Relief = styled.g`
  mix-blend-mode: hard-light;
`;
const Mesh = () => (
  <MeshSvg width="800" height="510" viewBox="0 0 1568 1530" preserveAspectRatio="none" aria-hidden="true">
    <defs>
      <clipPath id="mesh-clip">
        <path d={OUTLINE} />
      </clipPath>
      <linearGradient id="mesh-base" x1="0" y1="0" x2="1" y2="1">
        <stop offset="0" stopColor="#91919a" />
        <stop offset=".5" stopColor="#8f8f98" />
        <stop offset="1" stopColor="#8c8c96" />
      </linearGradient>
      <filter id="b-wide" x="-10%" y="-10%" width="120%" height="120%"><feGaussianBlur stdDeviation="12 18" /></filter>
      <filter id="b-mid" x="-10%" y="-10%" width="120%" height="120%"><feGaussianBlur stdDeviation="4 6" /></filter>
      <filter id="b-fine" x="-10%" y="-10%" width="120%" height="120%"><feGaussianBlur stdDeviation="2 3" /></filter>
      <filter id="relief" x="-5%" y="-5%" width="110%" height="110%" colorInterpolationFilters="sRGB">
        <feGaussianBlur stdDeviation="5 8" />
        <feDiffuseLighting surfaceScale="5" diffuseConstant="0.58" lightingColor="#fff">
          <feDistantLight azimuth="20" elevation="60" />
        </feDiffuseLighting>
      </filter>
    </defs>
    <g clipPath="url(#mesh-clip)">
      <path d={OUTLINE} fill="url(#mesh-base)" />
      <Ridges items={LIGHT} color="#95958f" filter="b-wide" />
      <Ridges items={DARK_WIDE} color="#5e5e6e" filter="b-wide" />
      <Ridges items={DARK} color="#76768a" filter="b-wide" />
      <Ridges items={OLIVE} color="#727270" filter="b-mid" />
      <Relief opacity=".8">
        <g filter="url(#relief)">
          <path d={OUTLINE} fill="#000" opacity=".01" />
          <Ridges items={OLIVE} color="#000" />
          <Ridges items={LIGHT} color="#000" />
        </g>
      </Relief>
      <Ridges items={DARK} color="#525264" filter="b-fine" />
      <Ridges items={LIGHT} color="#bababa" filter="b-mid" />
    </g>
  </MeshSvg>
);

const SidePanel = styled.aside`
  position: relative;
  display: flex;
  width: 180px;
  height: 100%;
  overflow: hidden;
  border-left: 1px solid #808080;
  background: #727272;
`;
const PanelContent = styled.div`
  flex: none;
  width: 163px;
  margin-top: -1px;
`;
const Section = styled.div<{ $pb?: number }>`
  padding: 0 7px ${(p) => p.$pb ?? 7}px;
  margin-left: 4px;
  width: 153px;
  border-bottom: 1px solid #3c3c3c;
  box-shadow: 0 1px 0 #868686;
  & > * {
    margin-left: -4px;
    margin-right: -4px;
  }
`;
const Label = styled.div<{ $h: number; $dim?: boolean }>`
  display: flex;
  align-items: flex-end;
  height: ${(p) => p.$h}px;
  padding: 0 0 3px 8px;
  color: ${(p) => (p.$dim ? "#4a4a4a" : "#000")};
`;
const Title = styled.h2`
  display: flex;
  align-items: center;
  gap: 4px;
  height: 24px;
  padding: 0 1px 0 5px;
  margin-top: 0;
  margin-bottom: 0;
  font-size: 12px;
  font-weight: 400;
`;
const Grow = styled.span`
  flex: 1;
`;
const SectionTitle = ({ text }: { text: string }) => (
  <Title>
    <svg width="9" height="8" viewBox="0 0 9 8" aria-hidden="true"><path d="M0 0h9L4.500 8z" fill="#222" /></svg>
    {text}
    <Grow />
    <svg width="12" height="5" viewBox="0 0 12 5" aria-hidden="true">
      <path d="M0 1h12M0 4h12" stroke="#c4c4c4" strokeDasharray="1 2" />
    </svg>
  </Title>
);
const ItemRow = styled.div`
  display: flex;
  align-items: center;
  gap: 7px;
  padding: 8px 0 0 5px;
`;
const Track = styled.div<{ $vertical?: boolean }>`
  display: flex;
  flex: none;
  border-radius: 6px;
  background: linear-gradient(${(p) => (p.$vertical ? "90deg" : "180deg")}, #505050, #606060);
  ${(p) => (p.$vertical ? "width: 12px; flex-direction: column;" : "height: 12px;")}
`;
const Thumb = styled.div<{ $from: number; $size: number; $vertical?: boolean }>`
  ${(p) =>
    p.$vertical
      ? `margin-top: ${p.$from}px; height: ${p.$size}px;`
      : `margin-left: ${p.$from}px; width: ${p.$size}%;`}
  border: 1px solid #3c3c3c;
  border-radius: 6px;
  background: linear-gradient(${(p) => (p.$vertical ? "90deg" : "180deg")}, #929292, #787878);
`;
const SideTrack = styled.div`
  display: flex;
  padding: 5px 0 4px;
`;

const Layers = styled.div`
  display: grid;
  grid-template-columns: repeat(5, 1fr);
  grid-template-rows: 1fr 1fr;
  gap: 1px;
  width: 50px;
  height: 20px;
  flex: none;
  padding: 1px;
  border-radius: 5px;
  overflow: hidden;
  background: #2c2c2c;
`;
const LayerBtn = styled.button<{ $dot?: boolean }>`
  background: ${(p) => (p.$dot ? "radial-gradient(circle, #f29a3c 2px, #5c3a1a 3px, #666 4px)" : "#999")};
`;
const LayerGrid = ({ first }: { first?: boolean }) => (
  <Layers>
    {Array.from({ length: 10 }, (_, i) => (
      <LayerBtn key={i} $dot={first && i === 0} aria-label={`Layer ${i + 1}`} />
    ))}
  </Layers>
);

const View3D = () => (
  <Area>
    <ViewBody>
      <Mesh />
      <Tab aria-label="Show tools"><TabPlus /></Tab>
      <SidePanel>
        <PanelContent>
          <Section $pb={1}>
            <NumField name="Lens:" value="35mm" />
            <Label $h={23}>Lock to Object:</Label>
            <Group>
              <IconSlot><Icon n="cubeO" /></IconSlot>
              <TextInput aria-label="Lock to Object" />
              <IconSlot><Icon n="dropper" /></IconSlot>
            </Group>
            <Check text="Lock to Cursor" />
            <Check text="Lock Camera to View" />
            <Label $h={23}>Clip:</Label>
            <FieldStack>
              <NumField name="Start:" value="10µm" />
              <NumField name="End:" value="1m" />
            </FieldStack>
            <Label $h={20} $dim>Local Camera:</Label>
            <Group $faded>
              <IconSlot><Icon n="cubeO" /></IconSlot>
              <TextInput aria-label="Local Camera" disabled />
              <IconSlot><Icon n="dropper" /></IconSlot>
            </Group>
            <Check text="Render Border" h={30} />
          </Section>
          <Section>
            <SectionTitle text="3D Cursor" />
            <Label $h={29}>Location:</Label>
            <FieldStack>
              <NumField name="X:" value="-1.13936cm" />
              <NumField name="Y:" value="-6.1904cm" />
              <NumField name="Z:" value="-2.55086cm" />
            </FieldStack>
          </Section>
          <Section>
            <SectionTitle text="Item" />
            <ItemRow>
              <Icon n="cubeO" />
              <Group $grow><TextInput aria-label="Object name" defaultValue="Beta_0" /></Group>
            </ItemRow>
          </Section>
          <Section>
            <SectionTitle text="Display" />
            <Check text="Only Render" on h={36} />
            <Check text="World Background" h={10} />
          </Section>
        </PanelContent>
        <SideTrack>
          <Track $vertical><Thumb $vertical $from={175} $size={163} /></Track>
        </SideTrack>
      </SidePanel>
      <Corner at="tr" />
    </ViewBody>
    <Bar>
      <EditorMenu icon="cubeW" label="Editor type: 3D View" />
      <Menus>
        <MenuBtn>View</MenuBtn>
        <MenuBtn>Select</MenuBtn>
        <MenuBtn>Add</MenuBtn>
        <MenuBtn>Object</MenuBtn>
      </Menus>
      <Select icon="cubeO" label="Mode" value="Object Mode" w={113} />
      <Group><Seg $w={33} $kind="menu" aria-label="Shading"><Icon n="sphere" /><UpDown /></Seg></Group>
      <Group>
        <Seg $w={34} $kind="menu" aria-label="Pivot"><Icon n="pivot" /><UpDown /></Seg>
        <Seg $w={19} aria-label="Object centers"><Icon n="centers" /></Seg>
      </Group>
      <Group>
        <Seg $w={19} aria-label="Manipulator"><Icon n="axes" /></Seg>
        <Seg $w={72} $kind="menu" $gap={24}>Global<UpDown /></Seg>
      </Group>
      <LayerGrid first />
      <LayerGrid />
      <Group><Seg $w={18} aria-label="Lock layers" $kind="tool"><Icon n="lockcam" /></Seg></Group>
      <Group $faded><Seg $w={19} aria-label="Proportional"><Icon n="prop" /></Seg></Group>
      <Group>
        <Seg $w={18} aria-label="Snap"><Icon n="magnet" /></Seg>
        <Seg $w={34} $kind="menu" aria-label="Snap element"><Icon n="snapinc" /><UpDown /></Seg>
        <Seg $w={19} aria-label="Snap grid"><Icon n="snapgrid" /></Seg>
      </Group>
      <Group>
        <Seg $w={19} aria-label="Render"><Icon n="camplus" /></Seg>
        <Seg $w={19} aria-label="Render animation"><Icon n="clapper" /></Seg>
      </Group>
      <Corner at="bl" />
    </Bar>
  </Area>
);

/* ---------- node editor ---------- */

const NodeBody = styled.div`
  position: relative;
  flex: 1;
  min-height: 0;
  overflow: hidden;
  background: #393939;
`;
const Layer = styled.svg`
  position: absolute;
  inset: 0;
  width: 100%;
  height: 100%;
`;
const NodeBox = styled.article<{ $x: number; $y: number; $w: number; $active?: boolean; $fill?: string; $pb?: number }>`
  position: absolute;
  left: ${(p) => p.$x}px;
  top: ${(p) => p.$y}px;
  width: ${(p) => p.$w}px;
  padding-bottom: ${(p) => p.$pb ?? 3}px;
  border-radius: 8px;
  background: ${(p) => p.$fill ?? "rgba(104, 104, 104, 0.75)"};
  box-shadow: 0 2px 7px rgba(0, 0, 0, 0.65), 0 0 0 1px ${(p) => (p.$active ? "#e08a28" : "rgba(30,30,30,.5)")};
`;
const NodeTitle = styled.h3`
  display: flex;
  align-items: center;
  gap: 7px;
  height: 20px;
  margin: 0 0 5px;
  padding: 4px 0 0 5px;
  border-radius: 8px 8px 0 0;
  background: linear-gradient(#626262, #505050);
  font-size: 11px;
  font-weight: 400;
`;
const Row = styled.div<{ $h?: number; $out?: boolean; $field?: boolean; $gap?: number; $end?: boolean }>`
  position: relative;
  display: flex;
  align-items: ${(p) => (p.$end ? "flex-end" : "center")};
  justify-content: ${(p) => (p.$out ? "flex-end" : "flex-start")};
  gap: ${(p) => p.$gap ?? 0}px;
  height: ${(p) => p.$h ?? 22}px;
  padding: ${(p) => (p.$field ? "0 11px 0 10px" : p.$out ? "2px 22px 0 0" : "2px 11px 0 17px")};
  white-space: nowrap;
`;
const Dot = styled.i<{ $c: string; $right?: boolean }>`
  position: absolute;
  ${(p) => (p.$right ? "right: -5px;" : "left: -5px;")}
  top: calc(50% - 6px);
  width: 11px;
  height: 11px;
  border: 1px solid #1c1c1c;
  border-radius: 50%;
  background: ${(p) => p.$c};
`;
const G = "#97f897";
const O = "#ea9a34";
const Node = ({
  title,
  active,
  children,
  ...rest
}: {
  title: string;
  active?: boolean;
  children: React.ReactNode;
  $x: number;
  $y: number;
  $w: number;
  $fill?: string;
  $pb?: number;
}) => (
  <NodeBox $active={active} {...rest}>
    <NodeTitle>
      <svg width="10" height="9" viewBox="0 0 10 9" aria-hidden="true"><path d="M0 0h10L5 9z" fill={active ? "#d25a1c" : "#383838"} /></svg>
      {title}
    </NodeTitle>
    {children}
  </NodeBox>
);
const Out = ({ t, c = G }: { t: string; c?: string }) => (
  <Row $out>{t}<Dot $c={c} $right /></Row>
);
const In = ({ t, c = G, h }: { t: string; c?: string; h?: number }) => (
  <Row $h={h}>{t}<Dot $c={c} /></Row>
);
const InNum = ({ t, v }: { t: string; v: string }) => (
  <Row $field><NumField name={t} value={v} /><Dot $c={G} /></Row>
);
const Stack = styled.div`
  display: flex;
  flex-direction: column;
  margin: 0 11px 0 10px;
  border: 1px solid #222;
  border-radius: 5px;
  overflow: hidden;
`;
const StackRow = styled.div<{ $h: number }>`
  display: flex;
  height: ${(p) => p.$h}px;
  & + & {
    border-top: 1px solid #222;
  }
`;

const link = (x1: number, y1: number, x2: number, y2: number) => {
  const m = Math.round((x2 - x1) / 2);
  return `M${x1} ${y1}C${x1 + m} ${y1} ${x2 - m} ${y2} ${x2} ${y2}`;
};
const LINKS: [string, string][] = [
  [link(171, 151, 717, 147), "#8a8a8a"],
  [link(171, 194, 1255, 324), "#8a8a8a"],
  [link(171, 151, 238, 300), "#c8c8c8"],
  [link(439, 251, 484, 319), "#e0e0e0"],
  [link(641, 245, 720, 354), "#8a8a8a"],
  [link(859, 260, 919, 302), "#8a8a8a"],
  [link(1058, 251, 1120, 186), "#8a8a8a"],
  [link(856, 82, 1120, 142), "#8a8a8a"],
  [link(856, 104, 1120, 164), "#8a8a8a"],
  [link(1219, 112, 1255, 281), "#8a8a8a"],
];
const Scrollers = styled.div`
  position: absolute;
  inset: 5px 4px 5px 6px;
  display: grid;
  grid-template-columns: 1fr 12px;
  grid-template-rows: 1fr 12px;
  column-gap: 7px;
  pointer-events: none;
`;
const HTrack = styled(Track)`
  grid-row: 2;
`;
const VTrack = styled(Track)`
  grid-column: 2;
  margin-bottom: 9px;
`;

const NodeEditor = () => (
  <Area>
    <NodeBody>
      <Layer aria-hidden="true">
        <defs>
          <pattern id="grid" x="14" y="10" width="99" height="99" patternUnits="userSpaceOnUse">
            <path d="M20.500 0v99M40.500 0v99M59.500 0v99M79.500 0v99M0 20.500h99M0 40.500h99M0 59.500h99M0 79.500h99" stroke="#313131" />
            <path d="M.5 0v99M0 .5h99" stroke="#2b2b2b" />
          </pattern>
        </defs>
        <rect width="100%" height="100%" fill="url(#grid)" />
        <path d="M510.500 0v600" stroke="#222" />
        {LINKS.map(([d, c], i) => (
          <g key={i} fill="none">
            <path d={d} stroke="#1c1c1c" strokeWidth="3.500" />
            <path d={d} stroke={c} strokeWidth="1.400" />
          </g>
        ))}
      </Layer>
      <Tab aria-label="Show node tools"><TabPlus /></Tab>

      <Node title="Plane MK2" $x={41} $y={115} $w={130}>
        <Out t="Vertices. 1" c={O} />
        <Out t="Edges" />
        <Out t="Polygons. 1" />
        <Row $h={28} $field><Check text="Separate" /></Row>
        <Stack>
          <StackRow $h={19}>
            <Seg $kind="on">XY</Seg>
            <Seg $kind="radio">YZ</Seg>
            <Seg $kind="radio">ZX</Seg>
          </StackRow>
          <StackRow $h={20}>
            <Seg $kind="down">Center</Seg>
            <Seg $w={55}>Normalize</Seg>
          </StackRow>
        </Stack>
        <Row $h={4} />
        <InNum t="N Verts X:" v="100" />
        <InNum t="N Verts Y:" v="100" />
        <InNum t="Step X:" v="1.00" />
        <InNum t="Step Y:" v="1.00" />
      </Node>

      <Node title="1/SCALAR" active $x={238} $y={216} $w={201} $pb={2}>
        <Out t="Out. 1" c={O} />
        <Row $h={26} $gap={6}>Functions:<Select label="Functions" value="Multiply 1/Scalar" /></Row>
        <In t="A. 1" c={O} h={24} />
        <InNum t="amount:" v="50.00" />
      </Node>

      <Node title="Variable Lacunarity" $x={484} $y={210} $w={157}>
        <Out t="Value. 1" />
        <Row $h={26} $gap={16}>Type:<Select label="Noise type" value="Voronoi_Cra" /></Row>
        <Row $h={26} $gap={16}>Type:<Select label="Basis type" value="Voronoi_F1" /></Row>
        <In t="Vertices. 1" c={O} />
        <InNum t="Seed:" v="3" />
        <InNum t="Distortion:" v="0.15" />
      </Node>

      <Node title="Vector out" $x={717} $y={47} $w={139}>
        <Out t="X. 1" />
        <Out t="Y. 1" />
        <Out t="Z" />
        <In t="Vectors. 1" c={O} h={20} />
      </Node>

      <Node title="Easing 0..1" $x={720} $y={225} $w={139} $pb={2}>
        <Out t="Float. 1" />
        <Row $h={23} $end>set easing function</Row>
        <Row $h={25} $field><Select label="Easing function" value="BounceEaseOut" /></Row>
        <Row $field><Check text="Show" /></Row>
        <In t="Float Input. 1" h={25} />
      </Node>

      <Node title="MUL" $x={919} $y={216} $w={139}>
        <Out t="Out. 1" />
        <Row $h={28} $field><Select label="Function" icon="func" value="Multiply" /></Row>
        <In t="x. 1" />
        <InNum t="y:" v="3.00" />
      </Node>

      <Node title="Vector in" $x={1120} $y={77} $w={99}>
        <Out t="Vectors. 1" c={O} />
        <Row $h={8} />
        <In t="X. 1" />
        <In t="Y. 1" />
        <In t="Z. 1" />
      </Node>

      <Node title="Viewer BMesh" $x={1255} $y={93} $w={139} $fill="#b33c0a">
        <Out t="Objects" c="#b4b4b4" />
        <Row $h={28} $field $gap={7}>
          <Group $grow><Seg $kind="down"><Icon n="blender" />UPD</Seg></Group>
          <Group>
            <Seg $w={18} aria-label="Visible"><Icon n="eye" /></Seg>
            <Seg $w={19} aria-label="Selectable"><Icon n="cursor" /></Seg>
            <Seg $w={19} aria-label="Renderable"><Icon n="camera" /></Seg>
          </Group>
        </Row>
        <Stack>
          <StackRow $h={19}><Seg>Group</Seg><Seg>Merge</Seg></StackRow>
          <StackRow $h={20}>
            <IconSlot><Icon n="triO" /></IconSlot>
            <TextInput aria-label="Mesh name" defaultValue="Beta" />
          </StackRow>
          <StackRow $h={32}><Seg>Select Toggle</Seg></StackRow>
        </Stack>
        <Row $h={30} $field>
          <Group $grow>
            <IconSlot><Icon n="matball" /></IconSlot>
            <TextInput aria-label="Material" />
            <Seg $w={19} aria-label="New material"><Icon n="plus" /></Seg>
          </Group>
        </Row>
        <In t="vertices. 1" c={O} />
        <In t="edges" />
        <In t="faces. 1" />
        <In t="matrix" c="#35cdcd" />
      </Node>

      <Scrollers>
        <HTrack><Thumb $from={0} $size={100} /></HTrack>
        <VTrack $vertical><Thumb $vertical $from={0} $size={92} /></VTrack>
      </Scrollers>
      <Tab $right aria-label="Show properties"><TabPlus /></Tab>
      <Corner at="tr" />
    </NodeBody>
    <Bar>
      <EditorMenu icon="nodes" label="Editor type: Node Editor" />
      <Menus>
        <MenuBtn>View</MenuBtn>
        <MenuBtn>Select</MenuBtn>
        <MenuBtn>Add</MenuBtn>
        <MenuBtn>Node</MenuBtn>
      </Menus>
      <Group>
        <Seg $w={19} $kind="radio" aria-label="Shader nodes"><Icon n="shader" o={0.8} /></Seg>
        <Seg $w={20} $kind="on" aria-label="Sverchok nodes"><Icon n="helix" /></Seg>
        <Seg $w={19} $kind="radio" aria-label="Compositing nodes"><Icon n="layers" o={0.6} /></Seg>
        <Seg $w={20} $kind="radio" aria-label="Texture nodes"><Icon n="checker" o={0.8} /></Seg>
        <Seg $w={19} $kind="radio" aria-label="Material nodes"><Icon n="matball" o={0.6} /></Seg>
      </Group>
      <Group>
        <Seg $w={30} $kind="menu" aria-label="Browse node tree"><Icon n="helix" /><UpDown /></Seg>
        <TextInput $w={120} aria-label="Node tree" defaultValue="NodeTree.001" />
        <Seg $w={24}>2</Seg>
        <Seg $w={20}>F</Seg>
        <Seg $w={20} aria-label="Add tree"><Icon n="plus" /></Seg>
        <Seg $w={20} aria-label="Unlink tree"><Icon n="cross" /></Seg>
      </Group>
      <Group><Seg $w={18} aria-label="Pin"><Icon n="pin" /></Seg></Group>
      <Group $faded><Seg $w={19} aria-label="Go to parent"><Icon n="parent" /></Seg></Group>
      <Gap $w={5} />
      <Group><Seg $w={18} $kind="radio" aria-label="Draw bezier"><Icon n="backdrop" /></Seg></Group>
      <Group>
        <Seg $w={19} aria-label="Snap"><Icon n="magnet" /></Seg>
        <Seg $w={34} $kind="menu" aria-label="Snap node element"><Icon n="snapgrid" /><UpDown /></Seg>
      </Group>
      <Group>
        <Seg $w={19} aria-label="Copy nodes"><Icon n="copy" /></Seg>
        <Seg $w={19} aria-label="Paste nodes"><Icon n="paste" /></Seg>
      </Group>
      <Gap $w={0} />
      <Icon n="helix" />
      <Stats as="label">Templates</Stats>
      <Corner at="bl" />
    </Bar>
  </Area>
);

/* ---------- outliner ---------- */

const Tree = styled.div`
  position: relative;
  flex: 1;
  border-top: 1px solid #4a4a4a;
`;
const TreeRow = styled.div<{ $alt?: boolean; $hi?: boolean; $indent: number }>`
  display: flex;
  align-items: center;
  height: 20px;
  padding-left: ${(p) => p.$indent}px;
  background: ${(p) =>
    p.$hi ? "linear-gradient(90deg, #7f888e 151px, #727272 151px)" : p.$alt ? "#727272" : "#797979"};
  white-space: nowrap;
`;
const TreeName = styled.span<{ $sel?: boolean }>`
  padding: 2px 0 0 3px;
  color: ${(p) => (p.$sel ? "#fff" : "#000")};
`;
const Bubble = styled.span<{ $c: string }>`
  display: flex;
  padding: 1px;
  border-radius: 50%;
  background: ${(p) => p.$c};
`;
const DataIcons = styled.span<{ $gap: number }>`
  display: flex;
  align-items: center;
  flex: 1;
  gap: 4px;
  overflow: hidden;
  padding-left: ${(p) => p.$gap}px;
`;
const Cols = styled.span`
  display: flex;
  justify-content: space-around;
  flex: none;
  width: 60px;
`;
const TreeLines = styled.svg`
  position: absolute;
  inset: 0;
  width: 100%;
  height: 100%;
  pointer-events: none;
`;
const TreeScroll = styled.div`
  padding: 4px 5px;
`;
const Divider = styled.span`
  width: 1px;
  height: 10px;
  background: #3c3c3c;
  margin-right: 7px;
`;
const ObjRow = ({ name, sel, alt }: { name: string; sel?: boolean; alt?: boolean }) => (
  <TreeRow $indent={20} $alt={alt}>
    <Icon n="expand" />
    <Gap $w={4} />
    <Bubble $c={sel ? "#b98a5c" : "transparent"}><Icon n="triO" /></Bubble>
    <TreeName $sel={sel}>{name}</TreeName>
    <DataIcons $gap={10}>
      <Divider />
      <Icon n="triG" />
      <Icon n="wrench" />
    </DataIcons>
    <Cols>
      <Icon n="eye" o={sel ? 1 : 0.2} />
      <Icon n="cursor" />
      <Icon n="camera" />
    </Cols>
  </TreeRow>
);
const SubBar = styled(Bar)`
  padding-left: 9px;
`;
const Outliner = () => (
  <Area $h={168}>
    <SubBar as="header">
      <EditorMenu icon="outliner" label="Editor type: Outliner" />
      <Menus>
        <MenuBtn>View</MenuBtn>
        <MenuBtn>Search</MenuBtn>
      </Menus>
      <Select label="Display mode" value="All Scenes" w={90} />
    </SubBar>
    <Tree>
      <TreeRow $hi $indent={0}>
        <Icon n="collapse" />
        <Gap $w={4} />
        <Bubble $c="#a6acb0"><Icon n="scene" /></Bubble>
        <TreeName>Scene</TreeName>
      </TreeRow>
      <TreeRow $indent={25}>
        <Icon n="expand" />
        <Icon n="layers" />
        <TreeName>RenderLayers</TreeName>
        <DataIcons $gap={10}><Divider /></DataIcons>
        <Cols />
      </TreeRow>
      <TreeRow $alt $indent={40}>
        <Bubble $c="#9a9aa2"><Icon n="world" /></Bubble>
        <TreeName>World</TreeName>
      </TreeRow>
      <ObjRow name="Alpha_0" />
      <ObjRow name="Beta_0" sel alt />
      <TreeLines aria-hidden="true">
        <path d="M151.500 0v122M171.500 0v122M191.500 0v122" stroke="#4e4e4e" />
        <path d="M27.500 20v46M27.500 74v12M13 10.500h8M32 70.500h9M32 90.500h9" stroke="#333" />
      </TreeLines>
    </Tree>
    <TreeScroll><Track><Thumb $from={0} $size={70} /></Track></TreeScroll>
    <Corner at="tr" />
    <Corner at="bl" />
  </Area>
);

/* ---------- properties ---------- */

const TabStrip = styled(Group)`
  margin-left: 3px;
`;
const Context = styled.div`
  display: flex;
  align-items: center;
  gap: 6px;
  height: 38px;
  padding: 0 10px;
  border-top: 1px solid #555;
`;
const ContextName = styled.span`
  padding-top: 1px;
`;
const PropsBody = styled.div`
  display: flex;
  flex-direction: column;
  gap: 5px;
  padding: 7px 8px;
`;
const Line = styled.div`
  display: flex;
`;
const ModBox = styled.div`
  border: 1px solid #3c3c3c;
  border-radius: 5px;
  background: #7e7e7e;
`;
const ModHead = styled.div`
  display: flex;
  align-items: center;
  height: 32px;
  padding: 0 3px;
  border-bottom: 1px solid #3c3c3c;
`;
const ModBody = styled.div`
  display: flex;
  flex-direction: column;
  gap: 8px;
  padding: 8px 4px 12px;
`;
const Two = styled.div`
  display: grid;
  grid-template-columns: 88px minmax(0, 1fr);
  column-gap: 8px;
`;
const Col = styled.div`
  display: flex;
  flex-direction: column;
  gap: 2px;
  ${FieldBox} {
    flex: none;
  }
`;
const Plain = styled.button`
  display: flex;
`;
const TABS = ["camera", "layers", "scene", "world", "cubeO", "chain", "wrench", "triG", "matball"];
const Properties = () => (
  <Area>
    <SubBar as="header">
      <EditorMenu icon="props" label="Editor type: Properties" />
      <TabStrip>
        {TABS.map((t) => (
          <Seg key={t} $w={20} $kind={t === "wrench" ? "on" : "radio"} aria-label={t}>
            <Icon n={t} o={t === "wrench" ? 1 : 0.65} />
          </Seg>
        ))}
      </TabStrip>
    </SubBar>
    <Context>
      <Icon n="pin" />
      <Icon n="scene" />
      <svg width="5" height="8" viewBox="0 0 5 8" aria-hidden="true"><path d="M0 0l5 4l-5 4z" fill="#222" /></svg>
      <Gap $w={3} />
      <Icon n="cubeO" />
      <ContextName>Beta_0</ContextName>
    </Context>
    <PropsBody>
      <Line><Select label="Add modifier" value="Add Modifier" /></Line>
      <ModBox>
        <ModHead>
          <Plain aria-label="Collapse modifier"><Icon n="down" s={13} /></Plain>
          <Grow />
          <Icon n="subsurf" />
          <Group><Seg $w={18} $kind="text">S</Seg></Group>
          <Gap $w={6} />
          <Group>
            <Seg $w={15} $kind="down" aria-label="Render"><Icon n="camera" s={14} /></Seg>
            <Seg $w={17} $kind="down" aria-label="Viewport"><Icon n="eye" /></Seg>
            <Seg $w={17} $kind="down" aria-label="Edit mode"><Icon n="edit" /></Seg>
            <Seg $w={15} aria-label="On cage"><Icon n="triW" s={14} /></Seg>
          </Group>
          <Gap $w={8} />
          <Group>
            <Seg $w={13} aria-label="Move up"><Icon n="up" s={14} /></Seg>
            <Seg $w={14} aria-label="Move down"><Icon n="down" s={14} /></Seg>
          </Group>
          <Gap $w={6} />
          <Plain aria-label="Remove modifier"><Icon n="cross" /></Plain>
        </ModHead>
        <ModBody>
          <Two>
            <Group><Seg>Apply</Seg></Group>
            <Group><Seg>Copy</Seg></Group>
          </Two>
          <Group>
            <Seg $w={91} $kind="on">Catmull-Clark</Seg>
            <Seg $kind="radio">Simple</Seg>
          </Group>
          <Two>
            <Col>
              <Label $h={14}>Subdivisions:</Label>
              <NumField name="View:" value="3" />
              <NumField name="Render:" value="2" />
            </Col>
            <Col>
              <Label $h={14}>Options:</Label>
              <Check text="Subdivide ..." on h={20} />
              <Check text="Optimal D..." h={20} />
              <Check text="Use Open..." h={20} />
            </Col>
          </Two>
        </ModBody>
      </ModBox>
    </PropsBody>
    <Corner at="tr" />
  </Area>
);

const STATS =
  "v2.78 | Verts:1,257,698 | Faces:1,254,528 | Tris:2,509,056 | Objects:1/2 | Lamps:0/0 | Mem:124.98M | Beta_0";

export default function App() {
  return (
    <Screen>
      <Global />
      <Bar as="header">
        <EditorMenu icon="info" label="Editor type: Info" />
        <Menus>
          <MenuBtn>File</MenuBtn>
          <MenuBtn>Render</MenuBtn>
          <MenuBtn>Window</MenuBtn>
          <MenuBtn>Help</MenuBtn>
        </Menus>
        <Group>
          <Seg $w={30} $kind="menu" aria-label="Browse screens"><Icon n="layout" /><UpDown /></Seg>
          <TextInput $w={120} aria-label="Screen layout" defaultValue="Default" />
          <Seg $w={20} aria-label="Add screen"><Icon n="plus" /></Seg>
          <Seg $w={20} aria-label="Delete screen"><Icon n="cross" /></Seg>
        </Group>
        <Group>
          <Seg $w={30} $kind="menu" aria-label="Browse scenes"><Icon n="scene" /><UpDown /></Seg>
          <TextInput $w={120} aria-label="Scene" defaultValue="Scene" />
          <Seg $w={20} aria-label="Add scene"><Icon n="plus" /></Seg>
          <Seg $w={20} aria-label="Delete scene"><Icon n="cross" /></Seg>
        </Group>
        <Gap $w={7} />
        <Select label="Render engine" value="Cycles Render" w={111} />
        <Gap $w={8} />
        <Icon n="blender" />
        <Stats>
          {STATS.split(/(\d{2,})/).map((part, i) => (i % 2 ? <Digits key={i}>{part}</Digits> : part))}
        </Stats>
        <Corner at="bl" />
      </Bar>
      <Columns>
        <LeftCol>
          <View3D />
          <NodeEditor />
        </LeftCol>
        <RightCol>
          <Outliner />
          <Properties />
        </RightCol>
      </Columns>
    </Screen>
  );
}
